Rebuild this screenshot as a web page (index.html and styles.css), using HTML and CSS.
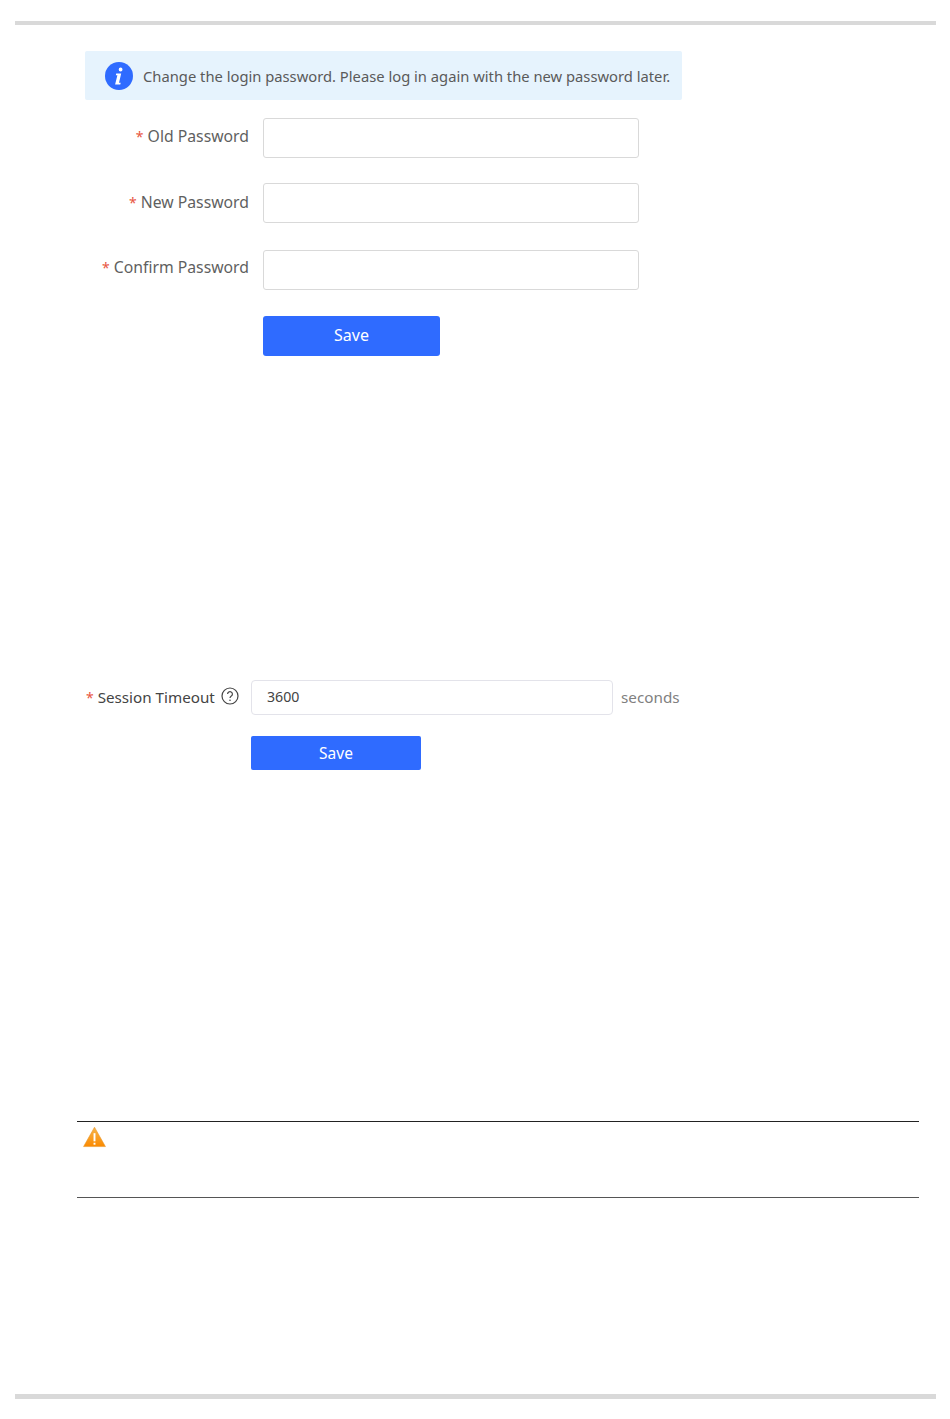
FILE: index.html
```html
<!DOCTYPE html>
<html lang="en">
<head>
<meta charset="utf-8">
<title>Change Password</title>
<link rel="stylesheet" href="styles.css">
</head>
<body>
<main class="page">
  <div class="rule rule-top"></div>

  <section class="password-section">
    <div class="alert">
      <svg class="alert-icon" viewBox="0 0 28 28" aria-hidden="true">
        <circle cx="14" cy="14" r="14" fill="#2f6bff"/>
        <path d="M15.6 5.6a1.9 1.9 0 1 1 0 3.8 1.9 1.9 0 0 1 0-3.8zM11.2 11.6h5l-2.2 9.2h1.7l-.4 1.7h-5.2l2.3-9.2h-1.6z" fill="#fff"/>
      </svg>
      <span>Change the login password. Please log in again with the new password later.</span>
    </div>
    <form class="form">
      <div class="row row-old"><label class="label"><span class="req">*</span> Old Password</label><input class="input" type="password"></div>
      <div class="row row-new"><label class="label"><span class="req">*</span> New Password</label><input class="input" type="password"></div>
      <div class="row row-confirm"><label class="label"><span class="req">*</span> Confirm Password</label><input class="input" type="password"></div>
      <div class="row row-save"><button class="btn" type="button">Save</button></div>
    </form>
  </section>

  <section class="session-section">
    <div class="session-row">
      <label class="session-label">
        <span class="session-text"><span class="req">*</span> Session Timeout</span>
        <svg class="help" viewBox="0 0 18 18" aria-hidden="true">
          <circle cx="9" cy="9" r="8" fill="none" stroke="#444" stroke-width="1.2"/>
          <path d="M6.6 7.1a2.4 2.4 0 1 1 3.7 2c-.9.6-1.3 1-1.3 2" fill="none" stroke="#444" stroke-width="1.2"/>
          <circle cx="9" cy="13.2" r=".8" fill="#444"/>
        </svg>
      </label>
      <input class="session-input" type="text" value="3600">
      <span class="unit">seconds</span>
    </div>
    <button class="btn btn-session" type="button">Save</button>
  </section>

  <section class="notice">
    <svg class="warn" viewBox="0 0 24 22" aria-hidden="true">
      <defs>
        <linearGradient id="warn-fill" x1="0" y1="0" x2="0" y2="1">
          <stop offset="0" stop-color="#f7b54a"/>
          <stop offset="1" stop-color="#fb8a00"/>
        </linearGradient>
      </defs>
      <path d="M12 .8 23.4 21H.6z" fill="url(#warn-fill)" stroke="#e8962a" stroke-width=".6"/>
      <rect x="11" y="7" width="2" height="8.5" fill="#fff"/>
      <rect x="11" y="17" width="2" height="2" fill="#fff"/>
    </svg>
  </section>

  <div class="rule rule-bottom"></div>
</main>
</body>
</html>
```
FILE: styles.css
```css
* { box-sizing: border-box; }
html, body { margin: 0; background: #fff; }
body { font-family: "Noto Sans", "Open Sans", sans-serif; color: #555; }
.page { width: 950px; height: 1419px; padding-top: 21px; overflow: hidden; }

.rule { height: 4px; margin: 0 14px 0 15px; background: #d9d9d9; }
.rule-bottom { height: 5px; margin-top: 196px; }

.password-section { margin: 26px 0 0 85px; height: 629px; }
.alert { width: 597px; height: 49px; padding-left: 20px; display: flex; align-items: center; gap: 10px; background: #e6f3fd; border-radius: 2px; font-size: 14.75px; color: #5a5a5a; white-space: nowrap; }
.alert-icon { width: 28px; height: 28px; flex: none; }

.row { display: flex; align-items: center; }
.row-old { margin-top: 18px; }
.row-new { margin-top: 25px; }
.row-confirm { margin-top: 27px; }
.row-save { margin-top: 26px; padding-left: 178px; }
.label { width: 164px; padding-bottom: 4px; text-align: right; font-size: 15.75px; color: #5f5f5f; white-space: nowrap; }
.row-new .label { padding-bottom: 2px; }
.row-confirm .label { padding-bottom: 6px; }
.req { color: #e8563f; font-size: 14px; }
.input { width: 376px; height: 40px; margin-left: 14px; border: 1px solid #d9d9d9; border-radius: 3px; background: #fff; }

.btn { display: block; width: 177px; height: 40px; padding: 0 0 2px; border: 0; border-radius: 3px; background: #2f6bff; color: #fff; font: 16px "Noto Sans", "Open Sans", sans-serif; }

.session-section { margin-left: 86px; height: 441px; }
.session-row { display: flex; align-items: center; height: 35px; }
.session-label { width: 165px; display: flex; align-items: center; gap: 6px; font-size: 15.2px; color: #444; white-space: nowrap; }
.session-text { padding-bottom: 2px; }
.help { width: 18px; height: 18px; flex: none; margin-bottom: 3px; }
.session-input { width: 362px; height: 35px; padding: 0 15px 2px; border: 1px solid #e3e3ea; border-radius: 4px; font: 14.2px "Noto Sans", "Open Sans", sans-serif; color: #444; }
.unit { margin: 0 0 2px 8px; font-size: 15.25px; color: #808080; }
.btn-session { width: 170px; height: 34px; margin: 21px 0 0 165px; padding: 0; border-radius: 2px; font-size: 15.5px; }

.notice { height: 77px; margin: 0 31px 0 77px; padding: 4px 0 0 6px; border-top: 1px solid #222; border-bottom: 1px solid #555; }
.warn { display: block; width: 23px; height: 22px; }
```
